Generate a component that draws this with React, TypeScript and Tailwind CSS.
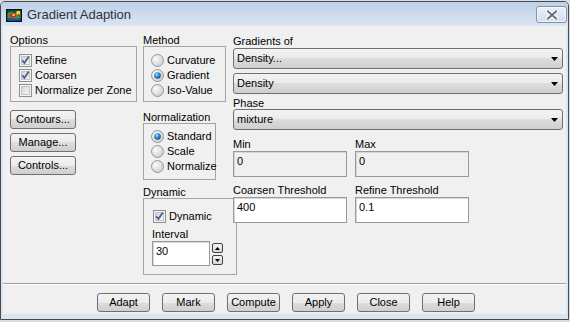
import React from 'react';

const btnBg =
  'bg-[linear-gradient(to_bottom,#f3f3f3_0%,#ebebeb_50%,#dddddd_50%,#cfcfcf_100%)]';

function TitleIcon() {
  return (
    <svg width="16" height="13" viewBox="0 0 16 13" className="ml-[5px] mt-[7px] shrink-0">
      <rect x="0.5" y="0.5" width="15" height="12" fill="#0c3434" stroke="#111" />
      <rect x="1.5" y="1.5" width="13" height="10" fill="#164f57" />
      <path d="M1.5 4.5 Q4 2 7.5 3.5 T14.5 3.5 V9 Q10 10.5 6 9.5 T1.5 9.5Z" fill="#27a844" />
      <ellipse cx="6.8" cy="6.4" rx="3.2" ry="2.2" fill="#e3211c" />
      <ellipse cx="7.6" cy="5.9" rx="1.4" ry="1" fill="#f8e51c" />
      <rect x="10.5" y="2" width="3.5" height="3.5" fill="#f2dc2a" />
      <rect x="11.5" y="5.5" width="2.5" height="2" fill="#e3211c" />
      <rect x="1.5" y="9.5" width="13" height="2" fill="#2150c2" />
    </svg>
  );
}

function CloseButton() {
  return (
    <div className="ml-auto mr-[1px] mt-[4px] flex h-[17px] w-[31px] items-center justify-center rounded-[3px] border border-[#8192aa] bg-[linear-gradient(to_bottom,#eaf0f7,#d3deeb)] shadow-[inset_0_0_0_1px_rgba(255,255,255,0.6)]">
      <svg width="12" height="10" viewBox="0 0 12 10">
        <path d="M2 1.5 L10 8.5 M10 1.5 L2 8.5" stroke="#ffffff" strokeWidth="4" strokeLinecap="square" />
        <path d="M2 1.5 L10 8.5 M10 1.5 L2 8.5" stroke="#6a707a" strokeWidth="2" strokeLinecap="square" />
      </svg>
    </div>
  );
}

function Check({ checked }: { checked: boolean }) {
  return (
    <svg width="13" height="13" viewBox="0 0 13 13" className="shrink-0">
      <defs>
        <linearGradient id="cbfill" x1="0" y1="0" x2="1" y2="1">
          <stop offset="0" stopColor="#d2d2d2" />
          <stop offset="1" stopColor="#f8f8f8" />
        </linearGradient>
      </defs>
      <rect x="0.5" y="0.5" width="12" height="12" fill="#f5f5f5" stroke="#8e8f8f" />
      <rect x="2.5" y="2.5" width="8" height="8" fill="url(#cbfill)" stroke="#c4c4c4" />
      {checked && (
        <path d="M3.2 6.2 L5.4 9 L9.8 2.6" fill="none" stroke="#4a5e97" strokeWidth="1.8" />
      )}
    </svg>
  );
}

function Radio({ on }: { on: boolean }) {
  return (
    <svg width="13" height="13" viewBox="0 0 13 13" className="shrink-0">
      <defs>
        <radialGradient id="rfill" cx="0.35" cy="0.35" r="0.8">
          <stop offset="0" stopColor="#fbfbfb" />
          <stop offset="1" stopColor="#c8c8c8" />
        </radialGradient>
        <radialGradient id="rdot" cx="0.4" cy="0.35" r="0.7">
          <stop offset="0" stopColor="#a6e2ff" />
          <stop offset="0.5" stopColor="#2a86d6" />
          <stop offset="1" stopColor="#0b4a8f" />
        </radialGradient>
      </defs>
      <circle cx="6.5" cy="6.5" r="6" fill="url(#rfill)" stroke="#979797" />
      {on && <circle cx="6.5" cy="6.5" r="3.3" fill="url(#rdot)" />}
    </svg>
  );
}

function CheckRow({ label, checked }: { label: string; checked: boolean }) {
  return (
    <div className="flex h-[13px] items-center gap-[3px]">
      <Check checked={checked} />
      <span>{label}</span>
    </div>
  );
}

function RadioRow({ label, on }: { label: string; on: boolean }) {
  return (
    <div className="flex h-[13px] items-center gap-[3px]">
      <Radio on={on} />
      <span>{label}</span>
    </div>
  );
}

function Combo({ value }: { value: string }) {
  return (
    <div className={`flex h-[21px] items-center justify-between rounded-[3px] border border-[#707070] pl-[3px] pr-[4px] ${btnBg}`}>
      <span>{value}</span>
      <svg width="7" height="4" viewBox="0 0 7 4">
        <path d="M0 0 H7 L3.5 4 Z" fill="#000" />
      </svg>
    </div>
  );
}

function Field({ value, disabled }: { value: string; disabled?: boolean }) {
  return (
    <div
      className={`h-[26px] w-[114px] border border-[#9a9a9a] pl-[3px] pt-[3px] shadow-[inset_1px_1px_0_#d6d6d6] ${
        disabled ? 'bg-[#f0f0f0]' : 'bg-white'
      }`}
    >
      {value}
    </div>
  );
}

function Button({ label, w }: { label: string; w: string }) {
  return (
    <div className={`flex h-[19px] ${w} items-center justify-center rounded-[3px] border border-[#707070] ${btnBg}`}>
      {label}
    </div>
  );
}

function SpinButton({ up }: { up: boolean }) {
  return (
    <div className="flex h-[10px] w-[11px] items-center justify-center rounded-[2px] border border-[#404040] bg-[linear-gradient(to_bottom,#f4f4f4,#d6d6d6)]">
      <svg width="5" height="3" viewBox="0 0 5 3">
        <path d={up ? 'M0 3 H5 L2.5 0 Z' : 'M0 0 H5 L2.5 3 Z'} fill="#000" />
      </svg>
    </div>
  );
}

export default function App() {
  return (
    <div className="h-[322px] w-[570px] overflow-hidden bg-[#d7dde6] font-['Liberation_Sans',Arial,sans-serif] text-[11px] leading-[13px] text-black">
      <div className="mt-[1px] flex h-[319px] w-[569px] flex-col overflow-hidden rounded-t-[5px] border border-[#4a4a4a]">
        {/* title bar */}
        <div className="flex h-[24px] shrink-0 items-start bg-[linear-gradient(to_bottom,#bfd1e6,#dae5f2)]">
          <TitleIcon />
          <span className="ml-[5px] mt-[5px] text-[13px] leading-[16px] text-[#2c3440]">Gradient Adaption</span>
          <CloseButton />
        </div>

        {/* frame + body */}
        <div className="flex-1 bg-[#dae5f2] px-[2px] pb-[5px]">
          <div className="flex h-[288px] flex-col bg-[#f0f0f0]">
            <div className="flex h-[257px] pl-[7px] pr-[3px] pt-[8px]">
              {/* left column */}
              <div className="flex w-[127px] shrink-0 flex-col">
                <div className="h-[12px] leading-[12px]">Options</div>
                <div className="flex h-[56px] flex-col gap-[2px] border border-[#a4a4a4] pl-[8px] pt-[7px]">
                  <CheckRow label="Refine" checked />
                  <CheckRow label="Coarsen" checked />
                  <CheckRow label="Normalize per Zone" checked={false} />
                </div>
                <div className="mt-[8px] flex flex-col gap-[4px]">
                  <Button label="Contours..." w="w-[66px]" />
                  <Button label="Manage..." w="w-[66px]" />
                  <Button label="Controls..." w="w-[66px]" />
                </div>
              </div>

              {/* middle column */}
              <div className="ml-[6px] flex w-[90px] shrink-0 flex-col">
                <div className="h-[12px] leading-[12px]">Method</div>
                <div className="flex h-[56px] w-[83px] flex-col gap-[2px] border border-[#a4a4a4] pl-[7px] pt-[7px]">
                  <RadioRow label="Curvature" on={false} />
                  <RadioRow label="Gradient" on />
                  <RadioRow label="Iso-Value" on={false} />
                </div>
                <div className="mt-[9px] h-[12px] leading-[12px]">Normalization</div>
                <div className="flex h-[57px] w-[73px] flex-col gap-[2px] border border-[#a4a4a4] pl-[7px] pt-[6px]">
                  <RadioRow label="Standard" on />
                  <RadioRow label="Scale" on={false} />
                  <RadioRow label="Normalize" on={false} />
                </div>
                <div className="mt-[6px] h-[12px] leading-[12px]">Dynamic</div>
                <div className="flex h-[77px] w-[94px] shrink-0 flex-col border border-[#a4a4a4] pl-[9px] pt-[11px]">
                  <CheckRow label="Dynamic" checked />
                  <div className="ml-[-1px] mt-[5px] h-[12px] leading-[12px]">Interval</div>
                  <div className="ml-[-1px] mt-[1px] flex items-start gap-[2px]">
                    <div className="h-[25px] w-[58px] border border-[#9a9a9a] bg-white pl-[3px] pt-[3px] shadow-[inset_1px_1px_0_#d6d6d6]">
                      30
                    </div>
                    <div className="mt-[2px] flex flex-col gap-[2px]">
                      <SpinButton up />
                      <SpinButton up={false} />
                    </div>
                  </div>
                </div>
              </div>

              {/* right column */}
              <div className="flex flex-1 flex-col">
                <div className="h-[14px] leading-[14px]">Gradients of</div>
                <Combo value="Density..." />
                <div className="mt-[4px]">
                  <Combo value="Density" />
                </div>
                <div className="mt-[3px] h-[12px] leading-[12px]">Phase</div>
                <Combo value="mixture" />
                <div className="mt-[8px] flex gap-[8px]">
                  <div className="flex flex-col">
                    <div className="h-[13px]">Min</div>
                    <Field value="0" disabled />
                  </div>
                  <div className="flex flex-col">
                    <div className="h-[13px]">Max</div>
                    <Field value="0" disabled />
                  </div>
                </div>
                <div className="mt-[7px] flex gap-[8px]">
                  <div className="flex flex-col">
                    <div className="h-[13px]">Coarsen Threshold</div>
                    <Field value="400" />
                  </div>
                  <div className="flex flex-col">
                    <div className="h-[13px]">Refine Threshold</div>
                    <Field value="0.1" />
                  </div>
                </div>
              </div>
            </div>

            <div className="h-[2px] border-b border-t border-b-white border-t-[#a0a0a0]" />

            <div className="flex gap-[12px] pl-[94px] pt-[8px]">
              <Button label="Adapt" w="w-[53px]" />
              <Button label="Mark" w="w-[53px]" />
              <Button label="Compute" w="w-[53px]" />
              <Button label="Apply" w="w-[53px]" />
              <Button label="Close" w="w-[53px]" />
              <Button label="Help" w="w-[53px]" />
            </div>
          </div>
        </div>
      </div>
    </div>
  );
}
